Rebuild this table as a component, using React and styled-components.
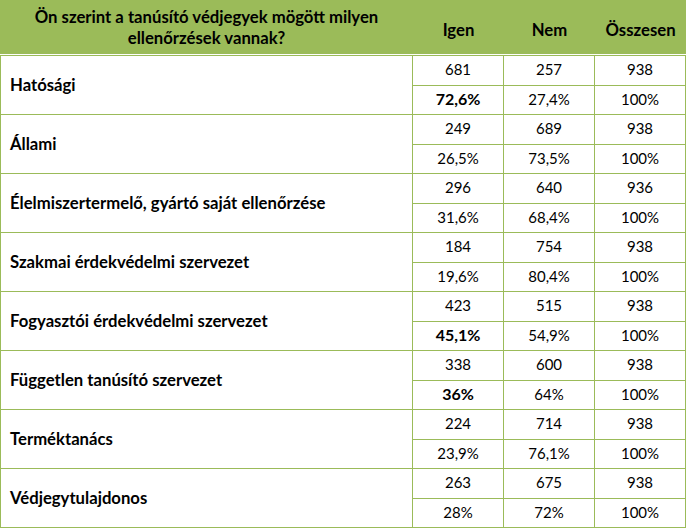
import React from "react";
import styled, { createGlobalStyle } from "styled-components";

const GREEN = "#9bbb59";

const GlobalStyle = createGlobalStyle`
  body {
    margin: 0;
    background: #fff;
    font-family: Lato, "Open Sans", "Liberation Sans", sans-serif;
    color: #000;
  }
`;

const Wrapper = styled.div`
  width: 686px;
`;

const Header = styled.div`
  display: grid;
  grid-template-columns: 413px 91px 91px 91px;
  height: 54px;
  background: ${GREEN};
  border-bottom: 1px solid #fff;
`;

const HeadCell = styled.div`
  display: flex;
  align-items: center;
  justify-content: center;
  text-align: center;
  font-weight: bold;
  font-size: 16.7px;
  line-height: 21px;
  padding-top: ${(p) => (p.$question ? "1px" : "6px")};
`;

const Body = styled.div`
  display: grid;
  grid-template-columns: 412px 91px 91px 91px;
  border-left: 1px solid ${GREEN};
  border-top: 1px solid ${GREEN};
`;

const Cell = styled.div`
  box-sizing: border-box;
  border-right: 1px solid ${GREEN};
  border-bottom: 1px solid ${GREEN};
  display: flex;
  align-items: center;
  font-size: 15px;
`;

const LabelCell = styled(Cell)`
  grid-row: span 2;
  padding-left: 9px;
  font-weight: bold;
  font-size: 16.7px;
`;

const NumCell = styled(Cell)`
  justify-content: center;
  height: ${(p) => (p.$first ? 30 : 29)}px;
  padding-bottom: 3px;
  font-weight: ${(p) => (p.$bold ? "bold" : "normal")};
  font-size: ${(p) => (p.$bold ? "16px" : "15px")};
`;

const rows = [
  ["Hatósági", ["681", "257", "938"], ["72,6%", "27,4%", "100%"], true],
  ["Állami", ["249", "689", "938"], ["26,5%", "73,5%", "100%"]],
  ["Élelmiszertermelő, gyártó saját ellenőrzése", ["296", "640", "936"], ["31,6%", "68,4%", "100%"]],
  ["Szakmai érdekvédelmi szervezet", ["184", "754", "938"], ["19,6%", "80,4%", "100%"]],
  ["Fogyasztói érdekvédelmi szervezet", ["423", "515", "938"], ["45,1%", "54,9%", "100%"], true],
  ["Független tanúsító szervezet", ["338", "600", "938"], ["36%", "64%", "100%"], true],
  ["Terméktanács", ["224", "714", "938"], ["23,9%", "76,1%", "100%"]],
  ["Védjegytulajdonos", ["263", "675", "938"], ["28%", "72%", "100%"]],
];

export default function App() {
  return (
    <Wrapper>
      <GlobalStyle />
      <Header>
        <HeadCell $question>
          Ön szerint a tanúsító védjegyek mögött milyen
          <br />
          ellenőrzések vannak?
        </HeadCell>
        <HeadCell>Igen</HeadCell>
        <HeadCell>Nem</HeadCell>
        <HeadCell>Összesen</HeadCell>
      </Header>
      <Body>
        {rows.map(([label, counts, shares, boldYes]) => (
          <React.Fragment key={label}>
            <LabelCell>{label}</LabelCell>
            {counts.map((c, i) => (
              <NumCell key={"c" + i} $first>
                {c}
              </NumCell>
            ))}
            {shares.map((s, i) => (
              <NumCell key={"s" + i} $bold={boldYes && i === 0}>
                {s}
              </NumCell>
            ))}
          </React.Fragment>
        ))}
      </Body>
    </Wrapper>
  );
}
